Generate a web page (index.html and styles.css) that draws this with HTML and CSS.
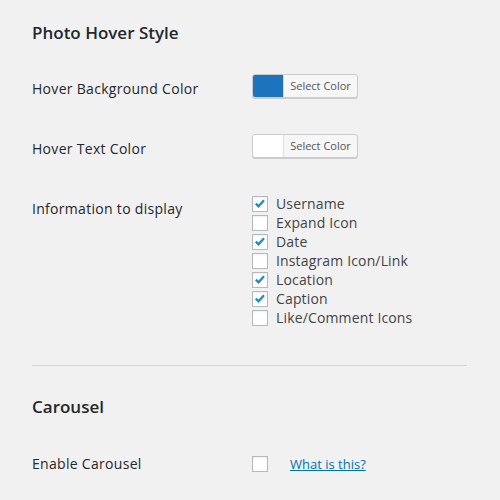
FILE: index.html
```html
<!DOCTYPE html>
<html>
<head>
<meta charset="utf-8">
<link rel="stylesheet" href="styles.css">
</head>
<body>
<div class="wrap">
  <h2 class="title first">Photo Hover Style</h2>
  <div class="row">
    <div class="label">Hover Background Color</div>
    <div class="field">
      <button class="color-btn"><span class="swatch blue"></span><span class="btn-text">Select Color</span></button>
    </div>
  </div>
  <div class="row">
    <div class="label">Hover Text Color</div>
    <div class="field">
      <button class="color-btn"><span class="swatch white"></span><span class="btn-text">Select Color</span></button>
    </div>
  </div>
  <div class="row">
    <div class="label">Information to display</div>
    <div class="field list">
      <label class="opt"><span class="cb checked"><svg viewBox="0 0 16 16"><path d="M3.2 7.6 L6.3 10.6 L12.6 3.6" fill="none" stroke="#1e8cbe" stroke-width="2.6"/></svg></span>Username</label>
      <label class="opt"><span class="cb"></span>Expand Icon</label>
      <label class="opt"><span class="cb checked"><svg viewBox="0 0 16 16"><path d="M3.2 7.6 L6.3 10.6 L12.6 3.6" fill="none" stroke="#1e8cbe" stroke-width="2.6"/></svg></span>Date</label>
      <label class="opt"><span class="cb"></span>Instagram Icon/Link</label>
      <label class="opt"><span class="cb checked"><svg viewBox="0 0 16 16"><path d="M3.2 7.6 L6.3 10.6 L12.6 3.6" fill="none" stroke="#1e8cbe" stroke-width="2.6"/></svg></span>Location</label>
      <label class="opt"><span class="cb checked"><svg viewBox="0 0 16 16"><path d="M3.2 7.6 L6.3 10.6 L12.6 3.6" fill="none" stroke="#1e8cbe" stroke-width="2.6"/></svg></span>Caption</label>
      <label class="opt"><span class="cb"></span>Like/Comment Icons</label>
    </div>
  </div>
  <hr class="sep">
  <h2 class="title second">Carousel</h2>
  <div class="row">
    <div class="label">Enable Carousel</div>
    <div class="field inline">
      <span class="cb"></span>
      <a class="help" href="#">What is this?</a>
    </div>
  </div>
</div>
</body>
</html>
```
FILE: styles.css
```css
html, body {
  margin: 0;
  padding: 0;
  background: #f1f1f1;
}
body {
  font-family: "Open Sans", "Noto Sans", sans-serif;
  color: #23282d;
  font-size: 14px;
}
.wrap {
  width: 435px;
  margin-left: 32px;
}
.title {
  font-size: 17px;
  font-weight: 600;
  line-height: 22px;
  margin: 0;
  color: #23282d;
}
.title.first {
  margin-top: 22px;
  margin-bottom: 15px;
}
.title.second {
  margin-top: 30px;
  margin-bottom: 16px;
}
.row {
  display: flex;
  align-items: flex-start;
}
.label {
  width: 220px;
  padding: 21px 0;
  line-height: 18px;
  letter-spacing: 0.3px;
  color: #23282d;
}
.field {
  padding: 15px 0;
}
.color-btn {
  display: flex;
  align-items: stretch;
  height: 24px;
  width: 106px;
  padding: 0;
  margin: 0;
  border: 1px solid #cccccc;
  border-radius: 3px;
  background: #f7f7f7;
  box-shadow: 0 1px 0 #cccccc;
  font-family: inherit;
  cursor: pointer;
  overflow: hidden;
}
.swatch {
  width: 30px;
  border-right: 1px solid #dddddd;
}
.swatch.blue { background: #1e73be; }
.swatch.white { background: #ffffff; }
.btn-text {
  flex: 1;
  font-size: 11px;
  line-height: 22px;
  color: #555555;
  text-align: center;
}
.list {
  display: flex;
  flex-direction: column;
}
.opt {
  display: flex;
  align-items: center;
  height: 19px;
  line-height: 19px;
  letter-spacing: 0.15px;
  color: #444;
}
.cb {
  box-sizing: border-box;
  width: 16px;
  height: 16px;
  border: 1px solid #b4b9be;
  background: #fff;
  box-shadow: inset 0 1px 2px rgba(0,0,0,0.07);
  margin-right: 8px;
  display: inline-flex;
  align-items: center;
  justify-content: center;
  flex: none;
}
.cb svg {
  width: 14px;
  height: 14px;
}
.sep {
  margin: 23px 0 0;
  border: 0;
  border-top: 1px solid #d4d4d4;
  height: 0;
}
.field.inline {
  display: flex;
  align-items: center;
  padding-top: 21px;
  height: 18px;
}
.help {
  margin-left: 14px;
  font-size: 13px;
  color: #0073aa;
  text-decoration: underline;
}
```
